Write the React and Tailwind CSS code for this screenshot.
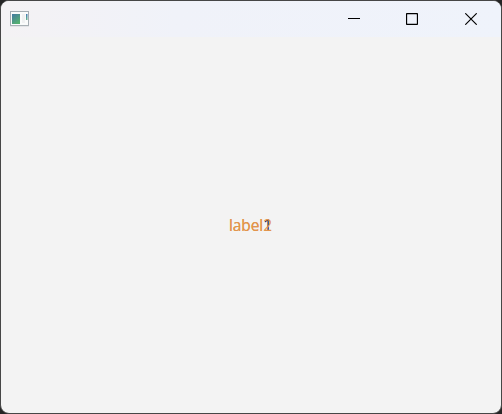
function AppIcon() {
  return (
    <svg className="h-[17px] w-5" viewBox="0 0 20 17" fill="none">
      <defs>
        <linearGradient id="pane" x1="0" y1="0" x2="0.6" y2="1">
          <stop offset="0" stopColor="#4479a3" />
          <stop offset="1" stopColor="#55b070" />
        </linearGradient>
        <linearGradient id="bar" x1="0" y1="0" x2="0" y2="1">
          <stop offset="0" stopColor="#4679b4" />
          <stop offset="1" stopColor="#63b58b" />
        </linearGradient>
      </defs>
      <rect x="0.5" y="1.5" width="18" height="14" fill="#fafbfb" stroke="#a5adb3" />
      <path d="M0 16.2H19" stroke="#c5cacd" strokeWidth="0.5" />
      <rect x="2" y="4" width="8" height="10" fill="url(#pane)" />
      <rect x="12" y="4" width="3" height="9" fill="#f0f1f2" />
      <rect x="16" y="4" width="1.5" height="6" fill="url(#bar)" />
    </svg>
  );
}

function TitleBar() {
  return (
    <header className="flex h-9 items-start justify-between bg-linear-to-r from-[#f4f2f4] via-[#f0f2f9] via-35% to-[#eff3fb]">
      <div className="pt-[9px] pl-[9px]">
        <AppIcon />
      </div>
      <div className="flex">
        <button aria-label="Minimize" className="flex h-9 w-[58px] items-center justify-center">
          <svg className="h-3 w-3" viewBox="0 0 12 12">
            <path d="M0 5.5H12" stroke="#000" />
          </svg>
        </button>
        <button aria-label="Maximize" className="flex h-9 w-[58px] items-center justify-center">
          <svg className="h-3 w-3" viewBox="0 0 12 12" fill="none">
            <rect x="0.5" y="0.5" width="11" height="11" rx="1" stroke="#000" strokeWidth="1.3" />
          </svg>
        </button>
        <button aria-label="Close" className="flex h-9 w-[60px] items-center justify-center">
          <svg className="h-3 w-3" viewBox="0 0 12 12">
            <path d="M0.3 0.3L11.7 11.7M11.7 0.3L0.3 11.7" stroke="#000" strokeWidth="1.15" />
          </svg>
        </button>
      </div>
    </header>
  );
}

export default function App() {
  return (
    <div className="h-[414px] w-[502px] overflow-hidden bg-[#252525]">
      <div className="flex h-full flex-col overflow-hidden rounded-[9px] border border-[#464646] bg-[#f3f3f3]">
        <TitleBar />
        <main className="grid flex-1 place-content-center pr-px font-['Open_Sans','Noto_Sans',sans-serif] text-[15.5px] leading-5 tracking-[-0.1px] text-[#e2954d]">
          <span className="col-start-1 row-start-1">
            label<span className="text-[#20203c]">1</span>
          </span>
          <span className="col-start-1 row-start-1">label2</span>
        </main>
      </div>
    </div>
  );
}
